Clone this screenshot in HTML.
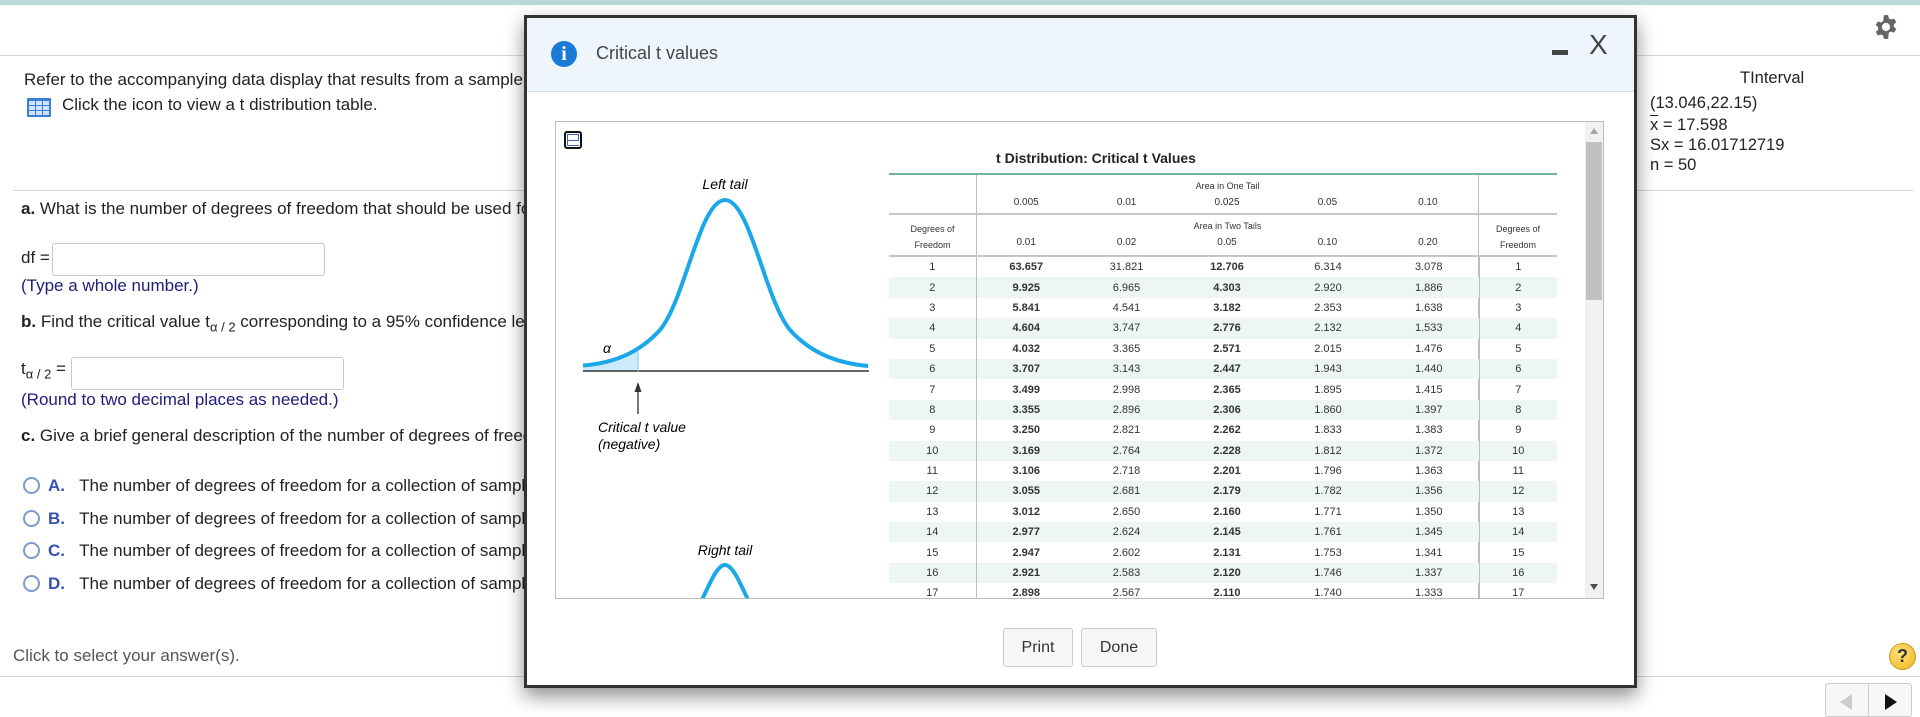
<!DOCTYPE html>
<html><head><meta charset="utf-8">
<style>
*{margin:0;padding:0;box-sizing:border-box}
body{width:1920px;height:714px;overflow:hidden;background:#fff;font-family:"Liberation Sans",Arial,sans-serif;color:#222;position:relative}
.a{position:absolute;white-space:nowrap}
.t15{font-size:17px}
.r15{font-size:16.5px}
.inp{position:absolute;border:1px solid #c8c8c8;border-radius:3px;background:#fff}
.navy{color:#1d1d7a}
.radio{position:absolute;width:17px;height:17px;border:2px solid #7d9bd0;border-radius:50%;background:#fff}
.let{color:#3552b5;font-weight:bold}
table{border-collapse:collapse;table-layout:fixed}
td{font-size:11px;text-align:center;height:20.4px;padding:0;color:#333;line-height:20px}
tr.s td{background:#edf6f0}
td.b{font-weight:bold}
td.v1{border-right:1px solid #bdbdbd}
td.v2{border-left:1px solid #bdbdbd}
.hand{font-family:"Liberation Sans",sans-serif;font-style:italic;color:#333}
</style></head><body>
<div class="a" style="left:0;top:0;width:1920px;height:5px;background:#b9d8d6"></div>
<div class="a" style="left:0;top:55px;width:1920px;height:1px;background:#d5d8de"></div>
<svg class="a" style="left:1873px;top:14px" width="26" height="26" viewBox="0 0 24 24"><path fill="#666" d="M10 1h4l.6 3a8 8 0 0 1 2 1.1l2.9-1 2 3.4-2.3 2a8 8 0 0 1 0 2.3l2.3 2-2 3.4-2.9-1a8 8 0 0 1-2 1.1L14 23h-4l-.6-3a8 8 0 0 1-2-1.1l-2.9 1-2-3.4 2.3-2a8 8 0 0 1 0-2.3l-2.3-2 2-3.4 2.9 1a8 8 0 0 1 2-1.1zM12 8.2a3.8 3.8 0 1 0 0 7.6 3.8 3.8 0 0 0 0-7.6z"/></svg>

<div class="a t15" style="left:24px;top:70px">Refer to the accompanying data display that results from a sample</div>
<svg class="a" style="left:27px;top:98px" width="24" height="19" viewBox="0 0 24 19"><rect width="24" height="19" fill="#3a7fd5" rx="1"/><g fill="#cfe3fb"><rect x="2" y="3" width="6" height="4"/><rect x="9" y="3" width="6" height="4"/><rect x="16" y="3" width="6" height="4"/><rect x="2" y="8" width="6" height="4"/><rect x="9" y="8" width="6" height="4"/><rect x="16" y="8" width="6" height="4"/><rect x="2" y="13" width="6" height="4"/><rect x="9" y="13" width="6" height="4"/><rect x="16" y="13" width="6" height="4"/></g></svg>
<div class="a t15" style="left:62px;top:95px">Click the icon to view a t distribution table.</div>
<div class="a" style="left:13px;top:190px;width:1900px;height:1px;background:#d5d8de"></div>
<div class="a t15" style="left:21px;top:199px"><b>a.</b> What is the number of degrees of freedom that should be used for</div>
<div class="a t15" style="left:21px;top:248px">df =</div>
<div class="inp" style="left:52px;top:243px;width:273px;height:33px"></div>
<div class="a t15 navy" style="left:21px;top:276px">(Type a whole number.)</div>
<div class="a t15" style="left:21px;top:312px"><b>b.</b> Find the critical value t<sub style="font-size:13px">α / 2</sub> corresponding to a 95% confidence level</div>
<div class="a t15" style="left:21px;top:359px">t<sub style="font-size:13px">α / 2</sub> =</div>
<div class="inp" style="left:71px;top:357px;width:273px;height:33px"></div>
<div class="a t15 navy" style="left:21px;top:390px">(Round to two decimal places as needed.)</div>
<div class="a t15" style="left:21px;top:426px"><b>c.</b> Give a brief general description of the number of degrees of freedom</div>
<div class="radio" style="left:23px;top:477px"></div><div class="a t15" style="left:48px;top:476px"><span class="let">A.</span>&nbsp;&nbsp;&nbsp;The number of degrees of freedom for a collection of sample</div>
<div class="radio" style="left:23px;top:510px"></div><div class="a t15" style="left:48px;top:509px"><span class="let">B.</span>&nbsp;&nbsp;&nbsp;The number of degrees of freedom for a collection of sample</div>
<div class="radio" style="left:23px;top:542px"></div><div class="a t15" style="left:48px;top:541px"><span class="let">C.</span>&nbsp;&nbsp;&nbsp;The number of degrees of freedom for a collection of sample</div>
<div class="radio" style="left:23px;top:575px"></div><div class="a t15" style="left:48px;top:574px"><span class="let">D.</span>&nbsp;&nbsp;&nbsp;The number of degrees of freedom for a collection of sample</div>
<div class="a t15" style="left:13px;top:646px;color:#555">Click to select your answer(s).</div>
<div class="a" style="left:0;top:676px;width:1920px;height:1px;background:#d5d8de"></div>

<div class="a r15" style="left:1740px;top:69px">TInterval</div>
<div class="a r15" style="left:1650px;top:94px">(13.046,22.15)</div>
<div class="a r15" style="left:1650px;top:116px"><span style="text-decoration:overline">x</span> = 17.598</div>
<div class="a r15" style="left:1650px;top:136px">Sx = 16.01712719</div>
<div class="a r15" style="left:1650px;top:156px">n = 50</div>
<div class="a" style="left:1636px;top:190px;width:272px;height:1px;background:#d5d8de"></div>
<div class="a" style="left:1889px;top:643px;width:27px;height:27px;border-radius:50%;background:radial-gradient(circle at 40% 35%,#ffe27a,#f0b21d);border:1px solid #c99a1a;text-align:center;font-weight:bold;font-size:18px;line-height:25px;color:#333">?</div>
<div class="a" style="left:1825px;top:683px;width:87px;height:34px;border:1px solid #ccc;border-radius:3px;background:#f7f7f7"></div>
<div class="a" style="left:1868px;top:683px;width:1px;height:34px;background:#ccc"></div>
<svg class="a" style="left:1840px;top:694px" width="14" height="16"><path d="M12 0L0 8l12 8z" fill="#ccc"/></svg>
<svg class="a" style="left:1884px;top:694px" width="14" height="16"><path d="M1 0l12 8-12 8z" fill="#111"/></svg>

<div class="a" style="left:524px;top:15px;width:1113px;height:673px;background:#fff;border:3px solid #333;box-shadow:0 8px 18px rgba(0,0,0,.45)"></div>
<div class="a" style="left:527px;top:18px;width:1107px;height:74px;background:#eff5fc;border-bottom:1px solid #c8e2f2"></div>
<div class="a" style="left:551px;top:41px;width:26px;height:26px;border-radius:50%;background:#1a7ad6;color:#fff;font-weight:bold;font-family:'Liberation Serif',serif;font-size:20px;text-align:center;line-height:26px">i</div>
<div class="a" style="left:596px;top:43px;font-size:18px;color:#444">Critical t values</div>
<div class="a" style="left:1552px;top:50px;width:16px;height:5px;background:#444"></div>
<div class="a" style="left:1589px;top:29px;font-size:28px;color:#444">X</div>

<div class="a" style="left:555px;top:121px;width:1049px;height:478px;border:1px solid #bbb;overflow:hidden">
<div class="a" style="left:1029px;top:0;width:18px;height:476px;background:#f1f1f1"></div>
<div class="a" style="left:1030px;top:20px;width:16px;height:158px;background:#c1c1c1"></div>
<svg class="a" style="left:1033px;top:5px" width="10" height="8"><path d="M5 1l4 6H1z" fill="#a3a3a3"/></svg>
<svg class="a" style="left:1033px;top:461px" width="10" height="8"><path d="M5 7L1 1h8z" fill="#505050"/></svg>
</div>
<div class="a" style="left:564px;top:131px;width:18px;height:18px;border:2px solid #111;border-radius:3px;background:#fff"></div>
<div class="a" style="left:567px;top:134px;width:12px;height:7px;border:1.5px solid #4060c0"></div>
<div class="a" style="left:567px;top:141px;width:12px;height:5px;border-left:1.5px solid #4060c0;border-bottom:1.5px solid #4060c0"></div>

<svg class="a" style="left:556px;top:122px" width="330" height="476" viewBox="556 122 330 476">
<path d="M583,365.5 C605,364 625,358 638,350 L638,371 L583,371Z" fill="#cdeafa"/>
<line x1="583" y1="371" x2="869" y2="371" stroke="#333" stroke-width="1.5"/>
<path d="M583,365.5 C615,363 640,352 660,330 C685,300 700,200 725,200 C750,200 765,300 790,330 C810,352 835,363 868,366" fill="none" stroke="#1aa8ea" stroke-width="4"/>
<line x1="638" y1="350" x2="638" y2="372" stroke="#7cc8f0" stroke-width="1"/>
<line x1="638" y1="385" x2="638" y2="414" stroke="#333" stroke-width="1.3"/>
<path d="M638,382 L634.5,392 L641.5,392Z" fill="#333"/>
<path d="M700,604 C712,578 718,565 725,565 C732,565 738,578 750,604" fill="none" stroke="#1aa8ea" stroke-width="4"/>
<text x="725" y="189" text-anchor="middle" class="hand" font-size="14">Left tail</text>
<text x="607" y="353" text-anchor="middle" class="hand" font-size="14">α</text>
<text x="598" y="432" class="hand" font-size="14">Critical t value</text>
<text x="598" y="449" class="hand" font-size="14">(negative)</text>
<text x="725" y="555" text-anchor="middle" class="hand" font-size="14">Right tail</text>
</svg>

<div class="a" style="left:990px;top:150px;width:212px;text-align:center;font-size:14px;font-weight:bold;color:#222">t Distribution: Critical t Values</div>
<div class="a" style="left:889px;top:173px;width:668px;height:2px;background:#71b39b"></div>
<div class="a" style="left:976px;top:175px;width:1px;height:423px;background:#bdbdbd"></div>
<div class="a" style="left:1478px;top:175px;width:1px;height:423px;background:#bdbdbd"></div>
<div class="a" style="left:889px;top:213px;width:668px;height:2px;background:#c7c7c7"></div>
<div class="a" style="left:889px;top:255px;width:668px;height:2px;background:#c7c7c7"></div>
<div class="a" style="left:977px;top:181px;width:501px;text-align:center;font-size:9px;color:#333">Area in One Tail</div>
<div class="a" style="left:977px;top:221px;width:501px;text-align:center;font-size:9px;color:#333">Area in Two Tails</div>
<div class="a" style="left:889px;top:221px;width:87px;text-align:center;font-size:9px;line-height:16px;color:#333;white-space:normal">Degrees of<br>Freedom</div>
<div class="a" style="left:1479px;top:221px;width:78px;text-align:center;font-size:9px;line-height:16px;color:#333;white-space:normal">Degrees of<br>Freedom</div>
<div class="a" style="top:197px;left:976px;width:502px;display:flex;font-size:10px;color:#333"><span style="flex:1;text-align:center">0.005</span><span style="flex:1;text-align:center">0.01</span><span style="flex:1;text-align:center">0.025</span><span style="flex:1;text-align:center">0.05</span><span style="flex:1;text-align:center">0.10</span></div>
<div class="a" style="top:237px;left:976px;width:502px;display:flex;font-size:10px;color:#333"><span style="flex:1;text-align:center">0.01</span><span style="flex:1;text-align:center">0.02</span><span style="flex:1;text-align:center">0.05</span><span style="flex:1;text-align:center">0.10</span><span style="flex:1;text-align:center">0.20</span></div>
<div class="a" style="left:889px;top:257px;width:668px;height:341px;overflow:hidden">
<table style="width:668px">
<colgroup><col style="width:87px"><col style="width:100px"><col style="width:101px"><col style="width:100px"><col style="width:102px"><col style="width:100px"><col style="width:78px"></colgroup>
<tr><td class="v1">1</td><td class="b">63.657</td><td>31.821</td><td class="b">12.706</td><td>6.314</td><td class="v1">3.078</td><td class="v2">1</td></tr>
<tr class="s"><td class="v1">2</td><td class="b">9.925</td><td>6.965</td><td class="b">4.303</td><td>2.920</td><td class="v1">1.886</td><td class="v2">2</td></tr>
<tr><td class="v1">3</td><td class="b">5.841</td><td>4.541</td><td class="b">3.182</td><td>2.353</td><td class="v1">1.638</td><td class="v2">3</td></tr>
<tr class="s"><td class="v1">4</td><td class="b">4.604</td><td>3.747</td><td class="b">2.776</td><td>2.132</td><td class="v1">1.533</td><td class="v2">4</td></tr>
<tr><td class="v1">5</td><td class="b">4.032</td><td>3.365</td><td class="b">2.571</td><td>2.015</td><td class="v1">1.476</td><td class="v2">5</td></tr>
<tr class="s"><td class="v1">6</td><td class="b">3.707</td><td>3.143</td><td class="b">2.447</td><td>1.943</td><td class="v1">1.440</td><td class="v2">6</td></tr>
<tr><td class="v1">7</td><td class="b">3.499</td><td>2.998</td><td class="b">2.365</td><td>1.895</td><td class="v1">1.415</td><td class="v2">7</td></tr>
<tr class="s"><td class="v1">8</td><td class="b">3.355</td><td>2.896</td><td class="b">2.306</td><td>1.860</td><td class="v1">1.397</td><td class="v2">8</td></tr>
<tr><td class="v1">9</td><td class="b">3.250</td><td>2.821</td><td class="b">2.262</td><td>1.833</td><td class="v1">1.383</td><td class="v2">9</td></tr>
<tr class="s"><td class="v1">10</td><td class="b">3.169</td><td>2.764</td><td class="b">2.228</td><td>1.812</td><td class="v1">1.372</td><td class="v2">10</td></tr>
<tr><td class="v1">11</td><td class="b">3.106</td><td>2.718</td><td class="b">2.201</td><td>1.796</td><td class="v1">1.363</td><td class="v2">11</td></tr>
<tr class="s"><td class="v1">12</td><td class="b">3.055</td><td>2.681</td><td class="b">2.179</td><td>1.782</td><td class="v1">1.356</td><td class="v2">12</td></tr>
<tr><td class="v1">13</td><td class="b">3.012</td><td>2.650</td><td class="b">2.160</td><td>1.771</td><td class="v1">1.350</td><td class="v2">13</td></tr>
<tr class="s"><td class="v1">14</td><td class="b">2.977</td><td>2.624</td><td class="b">2.145</td><td>1.761</td><td class="v1">1.345</td><td class="v2">14</td></tr>
<tr><td class="v1">15</td><td class="b">2.947</td><td>2.602</td><td class="b">2.131</td><td>1.753</td><td class="v1">1.341</td><td class="v2">15</td></tr>
<tr class="s"><td class="v1">16</td><td class="b">2.921</td><td>2.583</td><td class="b">2.120</td><td>1.746</td><td class="v1">1.337</td><td class="v2">16</td></tr>
<tr><td class="v1">17</td><td class="b">2.898</td><td>2.567</td><td class="b">2.110</td><td>1.740</td><td class="v1">1.333</td><td class="v2">17</td></tr>
</table>
</div>

<div class="a" style="left:1003px;top:628px;width:70px;height:39px;border:1px solid #ccc;border-radius:3px;background:#f6f6f6;text-align:center;line-height:37px;font-size:16px;color:#333">Print</div>
<div class="a" style="left:1081px;top:628px;width:76px;height:39px;border:1px solid #ccc;border-radius:3px;background:#f6f6f6;text-align:center;line-height:37px;font-size:16px;color:#333">Done</div>
</body></html>
